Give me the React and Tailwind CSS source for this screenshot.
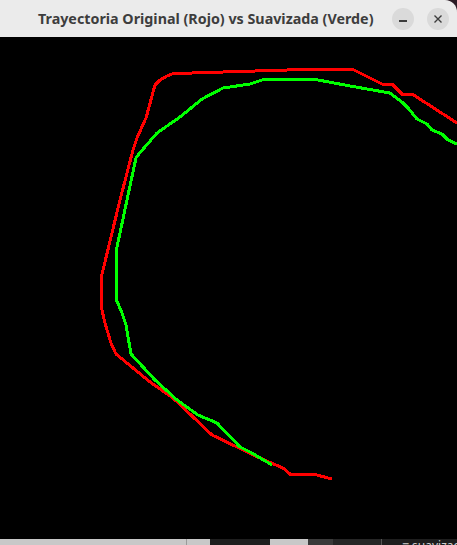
import React from "react";

const RED = [
  [160, 80], [167, 76], [172, 74], [192, 73], [223, 72], [255, 71], [287, 70],
  [317, 69], [352, 69], [382, 84], [392, 84], [402, 94], [412, 94], [457, 123],
];
const RED_LEFT = [
  [160, 80], [155, 85], [146, 118], [145, 120], [137, 138], [133, 150], [120, 200],
  [103, 270], [101, 278], [102, 310], [105, 323], [111, 343], [116, 354], [150, 382],
  [173, 398], [212, 435], [237, 447], [253, 455], [283, 468], [290, 474], [313, 474],
  [332, 479],
];
const GREEN = [
  [457, 144], [448, 140], [442, 134], [432, 130], [427, 124], [417, 119], [408, 108],
  [403, 103], [390, 93], [350, 86], [313, 79], [265, 79], [250, 84], [223, 88],
  [202, 99], [180, 117], [157, 133], [138, 155], [136, 158], [127, 200], [117, 247],
  [116, 250], [116, 299], [122, 313], [126, 325], [131, 354], [155, 380], [177, 400],
  [198, 415], [217, 423], [240, 447], [250, 452], [272, 465],
];

const toPoints = (pts) => pts.map((p) => p.join(",")).join(" ");

export default function App() {
  return (
    <div className="w-[457px] h-[545px] bg-[#2a1a24] flex flex-col overflow-hidden">
      {/* title bar */}
      <div className="h-[37px] shrink-0 bg-[#ebebeb] rounded-tr-[12px] flex items-center">
        <span
          className="ml-[38px] text-[14.3px] font-bold text-[#3d3d3d] whitespace-nowrap"
          style={{ fontFamily: '"Noto Sans", "Open Sans", sans-serif' }}
        >
          Trayectoria Original (Rojo) vs Suavizada (Verde)
        </span>
        <div className="ml-auto mr-[8px] flex items-center gap-[13px]">
          <div className="w-[22px] h-[22px] rounded-full bg-[#dadada] flex items-center justify-center">
            <div className="w-[8px] h-[1.5px] bg-[#3d3d3d] mt-[5px]" />
          </div>
          <div className="w-[22px] h-[22px] rounded-full bg-[#dadada] flex items-center justify-center">
            <svg width="10" height="10" viewBox="0 0 10 10">
              <path d="M1.5 1.5 L8.5 8.5 M8.5 1.5 L1.5 8.5" stroke="#3d3d3d" strokeWidth="1.4" />
            </svg>
          </div>
        </div>
      </div>

      {/* canvas */}
      <div className="h-[502px] shrink-0 bg-black">
        <svg width="457" height="502" viewBox="0 37 457 502" shapeRendering="crispEdges">
          <polyline points={toPoints(RED)} fill="none" stroke="#ff0000" strokeWidth="3" />
          <polyline points={toPoints(RED_LEFT)} fill="none" stroke="#ff0000" strokeWidth="3" />
          <polyline points={toPoints(GREEN)} fill="none" stroke="#00ff00" strokeWidth="3" />
        </svg>
      </div>

      {/* bits of the desktop behind */}
      <div className="h-[6px] shrink-0 flex">
        <div className="w-[187px] bg-[#c8c8c8] border-r border-[#9a9a9a]" />
        <div className="w-[23px] bg-[#c8c8c8]" />
        <div className="w-[60px] bg-[#1e1e1e]" />
        <div className="w-[38px] bg-[#c8c8c8]" />
        <div className="w-[25px] bg-[#3a3a3a]" />
        <div className="w-[49px] bg-[#262626] border-r border-[#555]" />
        <div className="flex-1 bg-[#1e1e1e] pl-[20px] overflow-hidden">
          <span
            className="block text-[12px] leading-[12px] mt-[1px] text-[#cfcfcf] whitespace-nowrap"
            style={{ fontFamily: '"Noto Sans", sans-serif' }}
          >
            ≡ suavizado
          </span>
        </div>
      </div>
    </div>
  );
}
